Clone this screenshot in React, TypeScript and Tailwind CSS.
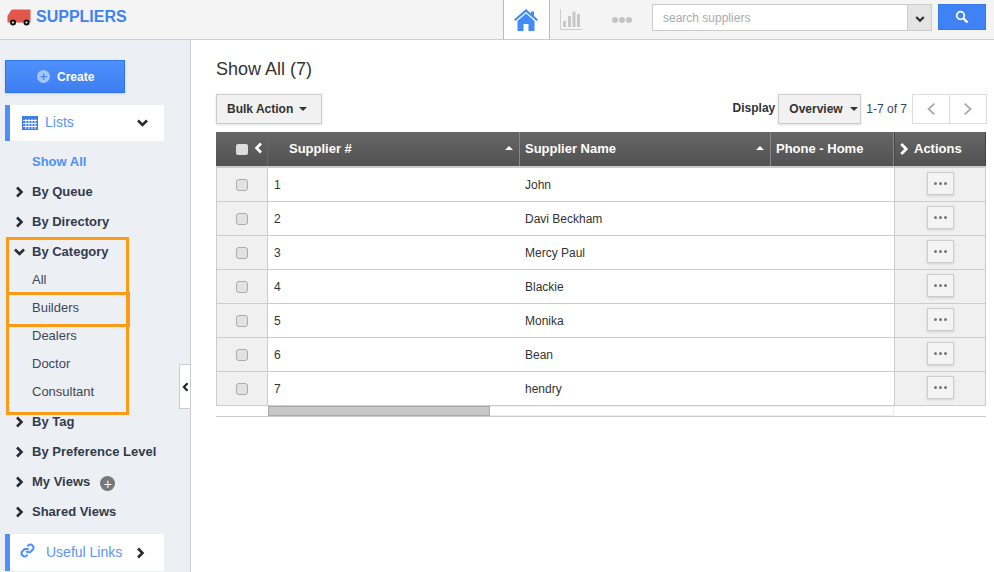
import { Fragment } from "react";

const suppliers = ["John", "Davi Beckham", "Mercy Paul", "Blackie", "Monika", "Bean", "hendry"];

function Chevron({ dir, className }: { dir: "right" | "left" | "down"; className: string }) {
  const d = { right: "M3 1.5 7.5 6 3 10.5", left: "M8 1.5 3.5 6 8 10.5", down: "M1 3.5 5.5 8 10 3.5" }[dir];
  return (
    <svg viewBox="0 0 11 12" className={className} fill="none" stroke="currentColor" strokeWidth="2.6">
      <path d={d} />
    </svg>
  );
}

function Truck() {
  return (
    <svg viewBox="0 0 24 17" className="w-[24px] h-[17px]">
      <path d="M8 0.500h15.500v13H0.500V7L4 1.500Q4.500 0.500 6 0.500z" fill="#e2574c" />
      <circle cx="6" cy="13.500" r="3" fill="#111" />
      <circle cx="6" cy="13.500" r="1" fill="#fff" />
      <circle cx="19.500" cy="13.500" r="3" fill="#111" />
      <circle cx="19.500" cy="13.500" r="1" fill="#fff" />
    </svg>
  );
}

function TreeRow({ label, open, children }: { label: string; open?: boolean; children?: React.ReactNode }) {
  return (
    <div className="h-[30px] flex items-center text-[13px] font-bold text-[#333b4a]">
      <span className="w-[32px] pl-[14px]">
        <Chevron dir={open ? "down" : "right"} className="w-[11px] h-[12px] text-[#2b2b33]" />
      </span>
      {label}
      {children}
    </div>
  );
}

function SubRow({ label }: { label: string }) {
  return <div className="h-[28px] flex items-center pl-[32px] text-[13px] text-[#3f4656]">{label}</div>;
}

function Sidebar() {
  return (
    <aside className="relative w-[191px] shrink-0 bg-[#ecf0f5] border-r border-[#cccccc] pl-[5px] pt-[20px]">
      <button className="w-[120px] h-[33px] flex items-center pl-[31px] gap-[7px] bg-gradient-to-b from-[#4e90fe] to-[#3e7ff0] border border-[#2f75ee] text-[12px] font-bold text-white shadow-sm">
        <span className="w-[13px] h-[13px] rounded-full bg-[#a5c5fb] text-[#4a8bf8] flex items-center justify-center text-[13px] leading-none">+</span>
        Create
      </button>

      <div className="mt-[12px] w-[159px] h-[36px] bg-white border-l-[5px] border-[#4d8ffb] flex items-center pl-[12px]">
        <svg viewBox="0 0 16 14" className="w-[16px] h-[14px]">
          <rect width="16" height="14" fill="#3f7fe8" />
          <path d="M1 4.500h14M1 7.500h14M1 10.500h14M4 3v10M7 3v10M10 3v10M13 3v10" stroke="#fff" strokeWidth="0.9" />
        </svg>
        <span className="ml-[7px] -mt-[2px] text-[14px] text-[#5b94fb]">Lists</span>
        <Chevron dir="down" className="ml-[63px] w-[11px] h-[12px] text-[#2b2b33]" />
      </div>

      <div className="mt-[6px] -ml-[5px]">
        <div className="h-[30px] flex items-center pl-[32px] text-[13px] font-bold text-[#4d8ffb]">Show All</div>
        <TreeRow label="By Queue" />
        <TreeRow label="By Directory" />
        <TreeRow label="By Category" open />
        <div className="-mt-[1px]">
          {["All", "Builders", "Dealers", "Doctor", "Consultant"].map((c) => (
            <SubRow key={c} label={c} />
          ))}
        </div>
        <div className="mt-[1px]">
          <TreeRow label="By Tag" />
          <TreeRow label="By Preference Level" />
          <TreeRow label="My Views">
            <span className="ml-[10px] mt-[3px] w-[15px] h-[15px] rounded-full bg-[#777777] text-white flex items-center justify-center text-[14px] font-normal leading-none">+</span>
          </TreeRow>
          <TreeRow label="Shared Views" />
        </div>
      </div>

      <div className="mt-[7px] w-[159px] h-[37px] bg-white border-l-[5px] border-[#4d8ffb] flex items-center pl-[10px]">
        <svg viewBox="0 0 24 24" className="w-[15px] h-[15px] text-[#4d8ffb] -mt-[4px]" fill="none" stroke="currentColor" strokeWidth="3.200">
          <path d="M10 13a5 5 0 0 0 7.500.500l3-3a5 5 0 0 0-7-7l-1.700 1.700" />
          <path d="M14 11a5 5 0 0 0-7.500-.500l-3 3a5 5 0 0 0 7 7l1.700-1.700" />
        </svg>
        <span className="ml-[11px] text-[14px] text-[#5b94fb]">Useful Links</span>
        <Chevron dir="right" className="ml-[13px] w-[11px] h-[12px] text-[#2b2b33]" />
      </div>

      {/* callouts drawn over the list */}
      <div className="absolute left-[6px] top-[197px] w-[123px] h-[178px] border-[3px] border-[#ff9a14] pointer-events-none" />
      <div className="absolute left-[6px] top-[252px] w-[124px] h-[35px] border-[3px] border-[#ff9a14] pointer-events-none" />

      <div className="absolute right-0 top-[324px] w-[11px] h-[45px] bg-white border border-r-0 border-[#cccccc] flex items-center justify-center">
        <Chevron dir="left" className="w-[9px] h-[10px] text-[#222]" />
      </div>
    </aside>
  );
}

function SupplierTable() {
  const head = "h-[34px] pt-[1px] pb-[1px] flex items-center text-[13px] font-bold text-white border-r border-[#888888]";
  const sortUp = <span className="ml-auto mr-[6px] mb-[3px] border-x-[4px] border-x-transparent border-b-[4px] border-b-white" />;
  return (
    <div className="mt-[8px] grid grid-cols-[52px_252px_251px_123px_92px]">
      <div className="col-span-5 grid grid-cols-subgrid bg-gradient-to-b from-[#666666] to-[#525252] border-b-2 border-[#cccccc] h-[36px]">
        <div className={head + " pl-[20px] gap-[5px] border-r-[#666666]"}>
          <span className="w-[12px] h-[11px] mt-[1px] rounded-[2px] bg-[#dddddd]" />
          <Chevron dir="left" className="w-[11px] h-[14px] -mt-[3px] text-white" />
        </div>
        <div className={head + " pl-[21px]"}>Supplier #{sortUp}</div>
        <div className={head + " pl-[5px]"}>Supplier Name{sortUp}</div>
        <div className={head + " pl-[5px]"}>Phone - Home</div>
        <div className={head + " pl-[3px] gap-[4px] border-l border-l-[#444] border-r-[#444]"}>
          <Chevron dir="right" className="w-[12px] h-[14px] text-white" />
          Actions
        </div>
      </div>
      {suppliers.map((name, i) => (
        <Fragment key={name}>
          <div className="h-[34px] bg-[#f0f0f0] border-l border-b border-r border-[#cccccc] flex items-center justify-center">
            <span className="w-[12px] h-[12px] rounded-[3px] bg-[#e2e2e2] border border-[#aaaaaa]" />
          </div>
          <div className="h-[34px] border-b border-[#cccccc] flex items-center pl-[6px] text-[12px] text-[#333333]">{i + 1}</div>
          <div className="h-[34px] border-b border-[#cccccc] flex items-center pl-[5px] text-[12px] text-[#333333]">{name}</div>
          <div className="h-[34px] border-b border-[#cccccc]" />
          <div className="h-[34px] bg-[#f0f0f0] border-l border-r border-b border-[#cccccc] flex items-center justify-center pb-[2px]">
            <button className="w-[27px] h-[23px] bg-[#f4f4f4] border border-[#cccccc] shadow-sm flex items-center justify-center gap-[2px]">
              <span className="w-[3px] h-[3px] rounded-full bg-[#777777]" />
              <span className="w-[3px] h-[3px] rounded-full bg-[#777777]" />
              <span className="w-[3px] h-[3px] rounded-full bg-[#777777]" />
            </button>
          </div>
        </Fragment>
      ))}
      <div className="col-span-5 grid grid-cols-subgrid h-[11px] border-b border-[#cccccc]">
        <div />
        <div className="col-span-3 h-[10px] border border-[#eeeeee]">
          <div className="-m-[1px] w-[222px] h-[10px] bg-[#c8c8c8] border border-[#aaaaaa]" />
        </div>
      </div>
    </div>
  );
}

export default function App() {
  return (
    <div className="h-screen overflow-hidden flex flex-col bg-white font-['Liberation_Sans',Arial,sans-serif]">
      <header className="h-[40px] shrink-0 bg-[#f4f4f4] border-b border-[#cccccc] flex">
        <div className="flex items-start gap-[5px] pl-[7px] pt-[8px]">
          <span className="mt-[1px]"><Truck /></span>
          <span className="-mt-[1px] text-[16px] font-bold text-[#3f82f5] leading-[20px]">SUPPLIERS</span>
        </div>
        <div className="ml-auto flex">
          <div className="w-[47px] h-[39px] bg-white border-x border-[#bbbbbb] flex items-center justify-center">
            <svg viewBox="0 0 24 22" className="w-[24px] h-[22px] -ml-[2px]" fill="#3f8cf7">
              <path d="M12 0 0 10.500 1.500 12 12 3l10.500 9L24 10.500 20 7V2.500h-3v2z" />
              <path d="M12 4.500 3.500 12v10H9.500v-7h5v7h6V12z" />
            </svg>
          </div>
          <div className="w-[42px] flex items-center justify-center">
            <svg viewBox="0 0 22 21" className="w-[22px] h-[21px]">
              <path d="M.5 0v20.500H22" fill="none" stroke="#cccccc" />
              <path d="M3 12h3v6H3zM8 7h3v11H8zM12.500 2.500h3V18h-3zM17 5h3v13h-3z" fill="#c8c8c8" />
            </svg>
          </div>
          <div className="w-[60px] flex items-center justify-center gap-[1px]">
            <span className="w-[6px] h-[6px] rounded-full bg-[#c4c4c4]" />
            <span className="w-[6px] h-[6px] rounded-full bg-[#c4c4c4]" />
            <span className="w-[6px] h-[6px] rounded-full bg-[#c4c4c4]" />
          </div>
          <div className="mt-[4px] w-[280px] h-[27px] flex bg-white border border-[#cccccc]">
            <span className="flex-1 pl-[10px] text-[12px] leading-[27px] text-[#aaaaaa]">search suppliers</span>
            <span className="w-[24px] bg-[#e4e4e4] border-l border-[#cccccc] flex items-center justify-center pt-[3px]">
              <Chevron dir="down" className="w-[10px] h-[10px] text-[#2b2b33]" />
            </span>
          </div>
          <button className="ml-[6px] mr-[8px] mt-[4px] w-[48px] h-[26px] bg-[#3f82f5] border border-[#3a78e6] flex items-center justify-center">
            <svg viewBox="0 0 14 14" className="w-[14px] h-[14px]" fill="none" stroke="#fff">
              <circle cx="5.500" cy="5.500" r="3.800" strokeWidth="1.800" />
              <path d="M8.500 8.500 12.500 12.500" strokeWidth="2.400" />
            </svg>
          </button>
        </div>
      </header>

      <div className="flex-1 flex min-h-0">
        <Sidebar />
        <main className="flex-1 pl-[25px] pr-[8px] pt-[18px]">
          <h1 className="text-[18px] leading-[22px] text-[#333333]">Show All (7)</h1>
          <div className="mt-[14px] -mr-[1px] flex items-center h-[30px]">
            <button className="w-[106px] h-[30px] pl-[10px] bg-[#f1f1f1] border border-[#cccccc] text-[12px] font-bold text-[#333333] flex items-center gap-[6px] shadow-sm">
              Bulk Action
              <span className="border-x-[4px] border-x-transparent border-t-[4px] border-t-[#333333]" />
            </button>
            <span className="ml-auto text-[12px] font-bold text-[#333333] -mt-[2px]">Display</span>
            <button className="ml-[3px] w-[83px] h-[30px] pl-[10px] bg-[#f1f1f1] border border-[#cccccc] text-[12px] font-bold text-[#333333] flex items-center gap-[7px] shadow-sm">
              Overview
              <span className="border-x-[4px] border-x-transparent border-t-[4px] border-t-[#333333]" />
            </button>
            <span className="ml-[5px] text-[12px] text-[#33475b]">1-7 of 7</span>
            <div className="ml-[5px] w-[75px] h-[30px] flex border border-[#dddddd]">
              <span className="flex-1 flex items-center justify-center border-r border-[#dddddd]">
                <svg viewBox="0 0 12 16" className="w-[10px] h-[14px]" fill="none" stroke="#aaaaaa" strokeWidth="2.200"><path d="M10 1.500 3 8l7 6.500" /></svg>
              </span>
              <span className="flex-1 flex items-center justify-center">
                <svg viewBox="0 0 12 16" className="w-[10px] h-[14px]" fill="none" stroke="#aaaaaa" strokeWidth="2.200"><path d="M2 1.500 9 8l-7 6.500" /></svg>
              </span>
            </div>
          </div>
          <SupplierTable />
        </main>
      </div>
    </div>
  );
}
